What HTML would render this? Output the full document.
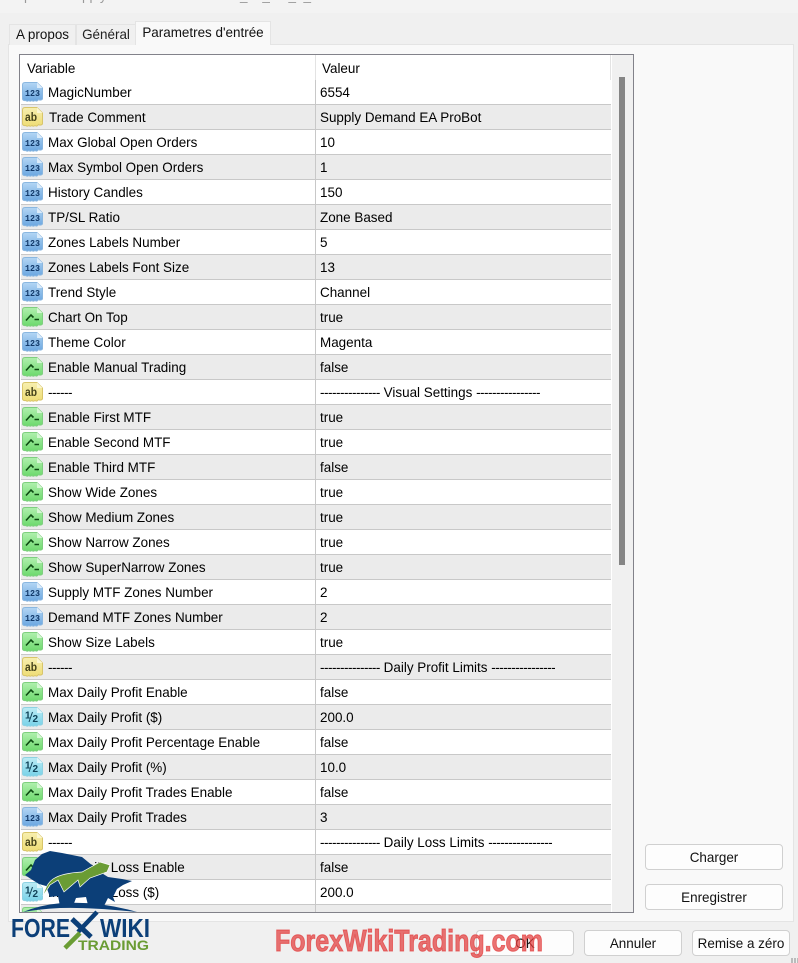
<!DOCTYPE html>
<html>
<head>
<meta charset="utf-8">
<style>
*{box-sizing:border-box}
html,body{margin:0;padding:0}
body{width:798px;height:963px;background:#f0f0f0;position:relative;overflow:hidden;font:13.45px "Liberation Sans",sans-serif;color:#000}
.top{position:absolute;left:0;top:0;width:798px;height:13px;background:#f3f3f3;color:#999;overflow:hidden}
.top span{position:absolute;top:-12px;white-space:pre}
.panel{position:absolute;left:8px;top:44px;width:786px;height:878px;background:#f9f9f9;border:1px solid #e4e4e4}
.tab{position:absolute;background:#f0f0f0;border:1px solid #e4e4e4;border-bottom:0;color:#111;white-space:nowrap;text-align:center}
.tab.on{background:#f9f9f9;z-index:2}
.grid{position:absolute;left:19px;top:54px;width:615px;height:859px;border:1px solid #82828a;background:#fff;overflow:hidden}
.head{position:absolute;left:0;top:0;width:591px;height:25px;background:#fff}
.head span{position:absolute;top:6px}
.sep{position:absolute;top:0;width:1px;height:25px;background:#e3e3e3}
.r{position:absolute;left:1px;width:590px;height:25px;border-bottom:1px solid #c8c8c8;background:#fff;white-space:nowrap}
.r.g{background:#ebebeb}
.r:before{content:"";position:absolute;left:294px;top:0;width:1px;height:25px;background:#c8c8c8}
.r svg{position:absolute;left:1px;top:2px;width:21px;height:20px}
.r b{position:absolute;left:27px;top:5px;font-weight:400}
.r i{position:absolute;left:299px;top:5px;font-style:normal}
.d{letter-spacing:-.48px}
.sb{position:absolute;left:592px;top:0;width:21px;height:857px;background:#f0f0f0}
.th{position:absolute;left:7px;top:22px;width:6px;height:488px;background:#858585}
.btn{position:absolute;height:26px;background:#fdfdfd;border:1px solid #d0d0d0;border-radius:4px;text-align:center;line-height:25px;color:#111}
.ov{position:absolute;left:0;top:0;pointer-events:none}
.grip{position:absolute;left:791px;top:958px;width:7px;height:5px;background:repeating-linear-gradient(90deg,#bbb 0 2px,transparent 2px 3px)}
</style>
</head>
<body>
<svg width="0" height="0" style="position:absolute">
<defs>
<linearGradient id="gb" x1="0" y1="0" x2="0" y2="1"><stop offset="0" stop-color="#b4d6f4"/><stop offset="1" stop-color="#6aa6e0"/></linearGradient>
<linearGradient id="gy" x1="0" y1="0" x2="0" y2="1"><stop offset="0" stop-color="#f7efb0"/><stop offset="1" stop-color="#eedc74"/></linearGradient>
<linearGradient id="gg" x1="0" y1="0" x2="0" y2="1"><stop offset="0" stop-color="#b0f0ae"/><stop offset="1" stop-color="#6cd96c"/></linearGradient>
<linearGradient id="gc" x1="0" y1="0" x2="0" y2="1"><stop offset="0" stop-color="#bcecf5"/><stop offset="1" stop-color="#78d2e8"/></linearGradient>
<symbol id="n" viewBox="0 0 21 20"><path d="M.5 3q0-2.500 2.500-2.500H15L20.500 6V17q-2 2-4 .5q-1.500 2.500-3.500 1q-2 1.500-3 0q-2 1.500-3 0q-2 1.500-3 0q-3 .5-3.500-1.500Z" fill="url(#gb)" stroke="#8ab7e0"/><path d="M15 .5V6h5.500z" fill="#dcecfa"/><text x="3" y="14" font-family="Liberation Mono" font-size="9" font-weight="700" fill="#123a6b" textLength="15" lengthAdjust="spacingAndGlyphs">123</text></symbol>
<symbol id="a" viewBox="0 0 21 20"><path d="M.5 3q0-2.500 2.500-2.500H15L20.500 6V17q-2 2-4 .5q-1.500 2.500-3.500 1q-2 1.500-3 0q-2 1.500-3 0q-2 1.500-3 0q-3 .5-3.500-1.500Z" fill="url(#gy)" stroke="#d8c56a"/><path d="M15 .5V6h5.500z" fill="#fbf6d0"/><text x="3" y="14" font-family="Liberation Sans" font-size="12" font-weight="700" fill="#44421a" textLength="12" lengthAdjust="spacingAndGlyphs">ab</text></symbol>
<symbol id="b" viewBox="0 0 21 20"><path d="M.5 3q0-2.500 2.500-2.500H15L20.500 6V17q-2 2-4 .5q-1.500 2.500-3.500 1q-2 1.500-3 0q-2 1.500-3 0q-2 1.500-3 0q-3 .5-3.500-1.500Z" fill="url(#gg)" stroke="#7fcf7f"/><path d="M15 .5V6h5.500z" fill="#d6f7d4"/><path d="M4 13.500L9 8L11.500 10.500M12.500 12.500H17" fill="none" stroke="#0d4a12" stroke-width="1.600"/></symbol>
<symbol id="f" viewBox="0 0 21 20"><path d="M.5 3q0-2.500 2.500-2.500H15L20.500 6V17q-2 2-4 .5q-1.500 2.500-3.500 1q-2 1.500-3 0q-2 1.500-3 0q-2 1.500-3 0q-3 .5-3.500-1.500Z" fill="url(#gc)" stroke="#8ed2e2"/><path d="M15 .5V6h5.500z" fill="#e0f6fb"/><text x="3" y="11.500" font-family="Liberation Sans" font-size="10" font-weight="700" fill="#12445a">1</text><path d="M7 15L10.500 5" stroke="#12445a"/><text x="10.500" y="15" font-family="Liberation Sans" font-size="10" font-weight="700" fill="#12445a">2</text></symbol>
</defs>
</svg>

<div class="top"><span style="left:24px">p</span><span style="left:82px">pply</span><span style="left:240px">_    _     _  _</span></div>
<div class="panel"></div>
<div class="tab" style="left:9px;top:24px;width:67px;height:21px;line-height:20px">A propos</div>
<div class="tab" style="left:76px;top:24px;width:60px;height:21px;line-height:20px;color:#222">Général</div>
<div class="tab on" style="left:135px;top:21px;width:136px;height:24px;line-height:21px">Parametres d'entrée</div>

<div class="grid">
<div class="head"><span style="left:7px">Variable</span><span style="left:302px">Valeur</span><div class="sep" style="left:295px"></div><div class="sep" style="left:590px"></div></div>
<div class="r" style="top:25px"><svg><use href="#n"/></svg><b>MagicNumber</b><i>6554</i></div>
<div class="r g" style="top:50px"><svg><use href="#a"/></svg><b style="left:28px">Trade Comment</b><i>Supply Demand EA ProBot</i></div>
<div class="r" style="top:75px"><svg><use href="#n"/></svg><b>Max Global Open Orders</b><i>10</i></div>
<div class="r g" style="top:100px"><svg><use href="#n"/></svg><b>Max Symbol Open Orders</b><i>1</i></div>
<div class="r" style="top:125px"><svg><use href="#n"/></svg><b>History Candles</b><i>150</i></div>
<div class="r g" style="top:150px"><svg><use href="#n"/></svg><b>TP/SL Ratio</b><i>Zone Based</i></div>
<div class="r" style="top:175px"><svg><use href="#n"/></svg><b>Zones Labels Number</b><i>5</i></div>
<div class="r g" style="top:200px"><svg><use href="#n"/></svg><b>Zones Labels Font Size</b><i>13</i></div>
<div class="r" style="top:225px"><svg><use href="#n"/></svg><b>Trend Style</b><i>Channel</i></div>
<div class="r g" style="top:250px"><svg><use href="#b"/></svg><b>Chart On Top</b><i>true</i></div>
<div class="r" style="top:275px"><svg><use href="#n"/></svg><b>Theme Color</b><i>Magenta</i></div>
<div class="r g" style="top:300px"><svg><use href="#b"/></svg><b>Enable Manual Trading</b><i>false</i></div>
<div class="r" style="top:325px"><svg><use href="#a"/></svg><b class="d">------</b><i><span class="d">---------------</span> Visual Settings <span class="d">----------------</span></i></div>
<div class="r g" style="top:350px"><svg><use href="#b"/></svg><b>Enable First MTF</b><i>true</i></div>
<div class="r" style="top:375px"><svg><use href="#b"/></svg><b>Enable Second MTF</b><i>true</i></div>
<div class="r g" style="top:400px"><svg><use href="#b"/></svg><b>Enable Third MTF</b><i>false</i></div>
<div class="r" style="top:425px"><svg><use href="#b"/></svg><b>Show Wide Zones</b><i>true</i></div>
<div class="r g" style="top:450px"><svg><use href="#b"/></svg><b>Show Medium Zones</b><i>true</i></div>
<div class="r" style="top:475px"><svg><use href="#b"/></svg><b>Show Narrow Zones</b><i>true</i></div>
<div class="r g" style="top:500px"><svg><use href="#b"/></svg><b>Show SuperNarrow Zones</b><i>true</i></div>
<div class="r" style="top:525px"><svg><use href="#n"/></svg><b>Supply MTF Zones Number</b><i>2</i></div>
<div class="r g" style="top:550px"><svg><use href="#n"/></svg><b>Demand MTF Zones Number</b><i>2</i></div>
<div class="r" style="top:575px"><svg><use href="#b"/></svg><b>Show Size Labels</b><i>true</i></div>
<div class="r g" style="top:600px"><svg><use href="#a"/></svg><b class="d">------</b><i><span class="d">---------------</span> Daily Profit Limits <span class="d">----------------</span></i></div>
<div class="r" style="top:625px"><svg><use href="#b"/></svg><b>Max Daily Profit Enable</b><i>false</i></div>
<div class="r g" style="top:650px"><svg><use href="#f"/></svg><b>Max Daily Profit ($)</b><i>200.0</i></div>
<div class="r" style="top:675px"><svg><use href="#b"/></svg><b>Max Daily Profit Percentage Enable</b><i>false</i></div>
<div class="r g" style="top:700px"><svg><use href="#f"/></svg><b>Max Daily Profit (%)</b><i>10.0</i></div>
<div class="r" style="top:725px"><svg><use href="#b"/></svg><b>Max Daily Profit Trades Enable</b><i>false</i></div>
<div class="r g" style="top:750px"><svg><use href="#n"/></svg><b>Max Daily Profit Trades</b><i>3</i></div>
<div class="r" style="top:775px"><svg><use href="#a"/></svg><b class="d">------</b><i><span class="d">---------------</span> Daily Loss Limits <span class="d">----------------</span></i></div>
<div class="r g" style="top:800px"><svg><use href="#b"/></svg><b>Max Daily Loss Enable</b><i>false</i></div>
<div class="r" style="top:825px"><svg><use href="#f"/></svg><b>Max Daily Loss ($)</b><i>200.0</i></div>
<div class="r g" style="top:850px"><svg><use href="#b"/></svg></div>
<div class="sb"><div class="th"></div></div>
</div>

<div class="btn" style="left:645px;top:844px;width:138px">Charger</div>
<div class="btn" style="left:645px;top:884px;width:138px">Enregistrer</div>
<div class="btn" style="left:476px;top:930px;width:98px">OK</div>
<div class="btn" style="left:584px;top:930px;width:98px">Annuler</div>
<div class="btn" style="left:692px;top:930px;width:98px;white-space:nowrap">Remise a zéro</div>
<div class="grip"></div>

<svg class="ov" width="798" height="963" viewBox="0 0 798 963">
<path d="M25 875L31 870L35 860L42 854L50 851L62 853L82 857L93 866L100 872L108 877L122 879L132 881L123 885L117 889L113 897L115 902L108 898L104 906L88 905L86 897L76 898L73 906L60 906L58 896L50 897L46 886L39 884L31 879Z" fill="#0c3f78"/>
<path d="M23 912Q40 905 62 903Q100 901 137 912Q90 907 60 908Q40 909 23 912Z" fill="#0c3f78"/>
<path d="M43 896Q46 884 53 879Q62 873 82 872L100 862L110 865L107 872L90 878L80 887L78 880L64 892L58 880L50 885Z" fill="#6a9c34" stroke="#fff" stroke-width=".7"/>
<g font-family="Liberation Sans" font-weight="700" fill="#0c3f78">
<text x="11" y="937" font-size="26" textLength="59" lengthAdjust="spacingAndGlyphs">FORE</text>
<text x="100" y="937" font-size="26" textLength="50" lengthAdjust="spacingAndGlyphs">WIKI</text>
</g>
<text x="78" y="950" font-family="Liberation Sans" font-weight="700" font-size="14" fill="#6a9c34" textLength="71" lengthAdjust="spacingAndGlyphs">TRADING</text>
<path d="M72 919L91 937" stroke="#0c3f78" stroke-width="5" fill="none"/>
<path d="M97 912L78 932" stroke="#0c3f78" stroke-width="4.500" fill="none"/>
<path d="M80 933L65 948" stroke="#6a9c34" stroke-width="4.500" fill="none"/>
<text x="275" y="951" font-family="Liberation Sans" font-weight="700" font-size="31" fill="#e23d3d" fill-opacity=".72" stroke="#e23d3d" stroke-opacity=".72" stroke-width="1" textLength="268" lengthAdjust="spacingAndGlyphs">ForexWikiTrading.com</text>
</svg>
</body>
</html>
